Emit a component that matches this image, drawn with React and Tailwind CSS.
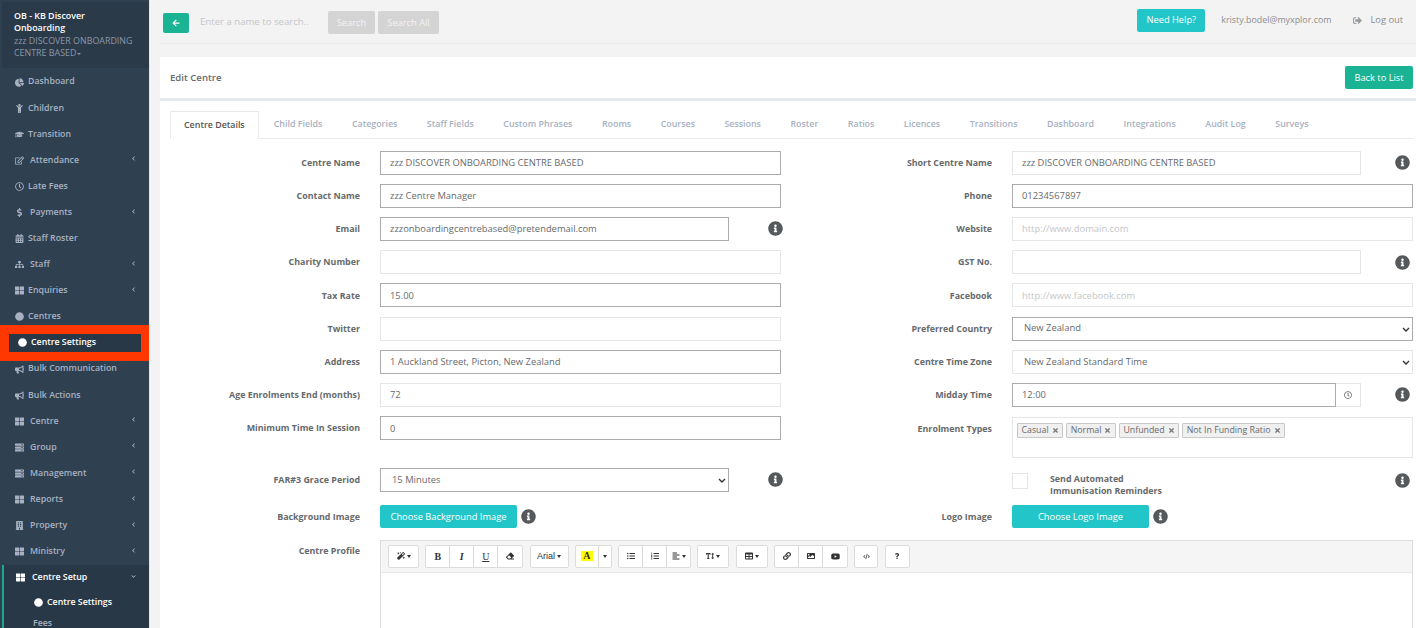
import {
  FaArrowLeft, FaBullhorn, FaBuilding, FaCalendarAlt, FaChartPie, FaChevronDown, FaChevronLeft, FaChild, FaCircle,
  FaCode, FaDollarSign, FaEraser, FaGraduationCap, FaImage, FaInfoCircle, FaLink, FaListOl, FaListUl, FaAlignLeft,
  FaMagic, FaQuestion, FaRegClock, FaRegEdit, FaServer, FaSignOutAlt, FaSitemap, FaTable, FaTextHeight, FaThLarge, FaTimes, FaYoutube,
} from 'react-icons/fa'

const NAV = [
  { label: 'Dashboard', icon: FaChartPie },
  { label: 'Children', icon: FaChild },
  { label: 'Transition', icon: FaGraduationCap },
  { label: 'Attendance', icon: FaRegEdit, sub: true, wide: true },
  { label: 'Late Fees', icon: FaRegClock },
  { label: 'Payments', icon: FaDollarSign, sub: true, wide: true },
  { label: 'Staff Roster', icon: FaCalendarAlt },
  { label: 'Staff', icon: FaSitemap, sub: true, wide: true },
  { label: 'Enquiries', icon: FaThLarge, sub: true },
  { label: 'Centres', icon: FaCircle },
  { label: 'Centre Settings', icon: FaCircle, marked: true },
  { label: 'Bulk Communication', icon: FaBullhorn },
  { label: 'Bulk Actions', icon: FaBullhorn },
  { label: 'Centre', icon: FaThLarge, sub: true, wide: true },
  { label: 'Group', icon: FaServer, sub: true, wide: true },
  { label: 'Management', icon: FaServer, sub: true, wide: true },
  { label: 'Reports', icon: FaThLarge, sub: true, wide: true },
  { label: 'Property', icon: FaBuilding, sub: true, wide: true },
  { label: 'Ministry', icon: FaThLarge, sub: true, wide: true },
]

const TABS = ['Centre Details', 'Child Fields', 'Categories', 'Staff Fields', 'Custom Phrases', 'Rooms', 'Courses', 'Sessions', 'Roster', 'Ratios', 'Licences', 'Transitions', 'Dashboard', 'Integrations', 'Audit Log', 'Surveys']

const inputCls = 'h-6 w-full border border-[#e5e6e7] bg-white px-[9px] text-[9.4px] text-[#676a6c] outline-none placeholder:text-[#c4c6c8]'
const strongCls = 'h-6 w-full border border-[#a9abad] bg-white px-[9px] text-[9.4px] text-[#676a6c] outline-none'

function Info({ className = '' }) {
  return <FaInfoCircle className={`text-[15px] text-[#55595c] shrink-0 ${className}`} />
}

function NavItem({ item }) {
  const Icon = item.icon
  return (
    <div className="relative flex h-[26.1px] shrink-0 items-center pl-[13px] pr-[13px] text-[8.8px] font-semibold text-[#a7b1c2]">
      <Icon className={`shrink-0 text-[9px] ${item.marked ? 'ml-[3px] text-white' : ''}`} />
      <span className={`${item.wide ? 'ml-[6px]' : 'ml-[4px]'} ${item.marked ? 'text-white' : ''}`}>{item.label}</span>
      {item.sub && <FaChevronLeft className="ml-auto mb-[3px] text-[5px]" />}
      {item.marked && (
        <div className="absolute left-[-2px] top-[-5px] flex h-[36px] w-[150px] border-[9px] border-[#ff3700] bg-transparent">
          <div className="-z-10 h-full w-full bg-[#293846]" />
        </div>
      )}
    </div>
  )
}

function Sidebar() {
  return (
    <aside className="flex h-full w-[150px] shrink-0 flex-col overflow-hidden border-r border-[#e7e7e7] bg-[#2f4050] pl-[2px]">
      <div className="mt-[2px] h-[66px] shrink-0 bg-[#2a3a49] pl-3 pr-2 pt-[8px] text-[8.9px] leading-[12.4px]">
        <div className="pr-8 font-semibold text-white">OB - KB Discover Onboarding</div>
        <div className="text-[#8a97a8]">
          zzz DISCOVER ONBOARDING CENTRE BASED
          <span className="ml-[1px] inline-block border-x-[2px] border-t-[2px] border-x-transparent border-t-[#8a97a8] align-middle" />
        </div>
      </div>
      <nav className="isolate mt-px flex flex-col">
        {NAV.map((item) => <NavItem key={item.label} item={item} />)}
        <div className="border-l-[2px] border-[#19aa8d] bg-[#293846]">
          <div className="flex h-[26px] items-center pl-[12px] pr-[13px] text-[8.8px] font-semibold text-white">
            <FaThLarge className="text-[9px]" />
            <span className="ml-[7px]">Centre Setup</span>
            <FaChevronDown className="ml-auto mb-[3px] text-[5px] text-[#a7b1c2]" />
          </div>
          <div className="flex h-[24px] items-center pl-[30px] text-[8.8px] font-semibold text-white">
            <FaCircle className="text-[9px]" />
            <span className="ml-[4px]">Centre Settings</span>
          </div>
          <div className="flex h-[18px] items-center pl-[29px] text-[8.8px] font-semibold text-[#a7b1c2]">Fees</div>
        </div>
      </nav>
    </aside>
  )
}

function TopBar() {
  return (
    <div className="mt-[2px] flex h-[42px] shrink-0 items-center border-b border-[#e7eaec] bg-[#f3f3f4] pl-[3px] pr-[13px]">
      <button className="flex h-[20px] w-[26px] items-center justify-center rounded-[2px] bg-[#1ab394] text-[8px] text-white"><FaArrowLeft /></button>
      <span className="ml-[11px] w-[128px] text-[9.6px] text-[#c4c6c8]">Enter a name to search..</span>
      <button className="h-[23px] w-[47px] rounded-[2px] bg-[#d4d4d4] text-[9.3px] text-[#f3f3f4]">Search</button>
      <button className="ml-[3px] h-[23px] w-[61px] rounded-[2px] bg-[#d4d4d4] text-[9.3px] text-[#f3f3f4]">Search All</button>
      <button className="mb-[5px] ml-auto h-[23px] w-[68px] rounded-[2px] bg-[#23c6c8] text-[9.3px] text-white">Need Help?</button>
      <span className="mb-[5px] ml-4 text-[8.9px] text-[#8b8d8f]">kristy.bodel@myxplor.com</span>
      <FaSignOutAlt className="mb-[5px] ml-[22px] text-[9px] text-[#999c9e]" />
      <span className="mb-[5px] ml-[8px] text-[9.3px] text-[#8b8d8f]">Log out</span>
    </div>
  )
}

function Tabs() {
  return (
    <div className="ml-[10px] mr-[3px] mt-[10px] flex h-[28px] shrink-0 items-stretch border-b border-[#e7eaec]">
      {TABS.map((tab, i) => (
        <div
          key={tab}
          className={`flex items-center pb-px text-[8.9px] font-semibold ${i === 0 ? '-mb-px mr-px border border-b-0 border-[#e7eaec] bg-white px-[13px] text-[#555]' : 'mr-[1.5px] px-[14px] text-[#a7b1c2]'}`}
        >
          {tab}
        </div>
      ))}
    </div>
  )
}

// one label + control pair; the label column is fixed so the controls line up
function Field({ label, children, className = 'h-[33.2px] items-center', right, labelClass = '' }) {
  return (
    <div className={`flex ${className} ${right ? 'pr-[3px]' : 'pr-[11px]'}`}>
      <label className={`w-[200px] shrink-0 text-right text-[8.9px] font-bold text-[#676a6c] ${labelClass}`}>{label}</label>
      <div className="ml-5 flex min-w-0 flex-1 items-center">{children}</div>
    </div>
  )
}

function Text({ value, strong, placeholder, short }) {
  return (
    <input
      readOnly
      value={value}
      placeholder={placeholder}
      className={`${strong ? strongCls : inputCls} ${short ? '!w-[349px] shrink-0' : ''}`}
    />
  )
}

function Picker({ value, strong = true, short }) {
  return (
    <div className={`relative ${short ? 'w-[349px] shrink-0' : 'w-full'}`}>
      <select value={value} onChange={() => {}} className={`${strong ? strongCls : inputCls} block appearance-none !px-[11px]`}>
        <option>{value}</option>
      </select>
      <svg viewBox="0 0 8 5" className="pointer-events-none absolute right-[3px] top-[10px] h-[5px] w-[8px]" fill="none" stroke="#333" strokeWidth="1.4">
        <path d="M1 1l3 3 3-3" />
      </svg>
    </div>
  )
}

function Tag({ label }) {
  return (
    <span className="flex h-[15px] items-center gap-[3px] rounded-[1px] border border-[#c8c8c8] bg-[#f0f0f0] px-[3.5px] text-[8.8px] text-[#676a6c]">
      {label}
      <FaTimes className="text-[7px] text-[#777]" />
    </span>
  )
}

function Btn({ children, className = 'w-[24px]' }) {
  return <div className={`flex h-[21px] items-center justify-center gap-[2px] border-r border-[#d9d9d9] text-[9px] text-[#333] last:border-r-0 ${className}`}>{children}</div>
}

function Group({ children }) {
  return <div className="flex overflow-hidden rounded-[2px] border border-[#dcdcdc] bg-white">{children}</div>
}

function Caret() {
  return <span className="inline-block border-x-[2.5px] border-t-[3px] border-x-transparent border-t-[#333]" />
}

function Toolbar() {
  return (
    <div className="flex h-[32px] items-center gap-[6.3px] border-b border-[#e7e7e7] bg-[#f5f5f5] pl-[7px]">
      <Group><Btn className="w-[29px]"><FaMagic className="text-[8px]" /><Caret /></Btn></Group>
      <Group>
        <Btn><span className="font-['Liberation_Serif'] text-[10px] font-bold">B</span></Btn>
        <Btn><span className="font-['Liberation_Serif'] text-[10px] italic font-bold">I</span></Btn>
        <Btn><span className="font-['Liberation_Serif'] text-[10px] underline">U</span></Btn>
        <Btn><FaEraser className="text-[8px]" /></Btn>
      </Group>
      <Group><Btn className="w-[37px]"><span className="font-['Liberation_Sans'] text-[9px]">Arial</span><Caret /></Btn></Group>
      <Group>
        <Btn className="w-[23px]"><span className="bg-[#ffff00] px-[2px] font-['Liberation_Serif'] text-[10px] leading-[10px] font-bold">A</span></Btn>
        <Btn className="w-[12px]"><Caret /></Btn>
      </Group>
      <Group>
        <Btn><FaListUl className="text-[8px]" /></Btn>
        <Btn><FaListOl className="text-[8px]" /></Btn>
        <Btn className="w-[23px]"><FaAlignLeft className="text-[8px]" /><Caret /></Btn>
      </Group>
      <Group><Btn className="w-[30px]"><FaTextHeight className="text-[8px]" /><Caret /></Btn></Group>
      <Group><Btn className="w-[30px]"><FaTable className="text-[8px]" /><Caret /></Btn></Group>
      <Group>
        <Btn><FaLink className="text-[8px]" /></Btn>
        <Btn><FaImage className="text-[8px]" /></Btn>
        <Btn><FaYoutube className="text-[9px]" /></Btn>
      </Group>
      <Group><Btn className="w-[22px]"><FaCode className="text-[7px] text-[#666]" /></Btn></Group>
      <Group><Btn className="w-[23px]"><FaQuestion className="text-[6px]" /></Btn></Group>
    </div>
  )
}

function Form() {
  return (
    <div className="mt-[-4px] grid grid-cols-[632px_1fr] pt-[11px]">
      <div className="col-start-1">
        <Field label="Centre Name"><Text strong value="zzz DISCOVER ONBOARDING CENTRE BASED" /></Field>
        <Field label="Contact Name"><Text strong value="zzz Centre Manager" /></Field>
        <Field label="Email">
          <Text strong short value="zzzonboardingcentrebased@pretendemail.com" />
          <Info className="ml-[39px]" />
        </Field>
        <Field label="Charity Number"><Text value="" /></Field>
        <Field label="Tax Rate"><Text strong value="15.00" /></Field>
        <Field label="Twitter"><Text value="" /></Field>
        <Field label="Address"><Text strong value="1 Auckland Street, Picton, New Zealand" /></Field>
        <Field label="Age Enrolments End (months)"><Text value="72" /></Field>
        <Field label="Minimum Time In Session"><Text strong value="0" /></Field>
      </div>
      <div className="col-start-2">
        <Field right label="Short Centre Name">
          <Text short value="zzz DISCOVER ONBOARDING CENTRE BASED" />
          <Info className="ml-auto mr-[3px]" />
        </Field>
        <Field right label="Phone"><Text strong value="01234567897" /></Field>
        <Field right label="Website"><Text value="" placeholder="http://www.domain.com" /></Field>
        <Field right label="GST No.">
          <Text short value="" />
          <Info className="ml-auto mr-[3px]" />
        </Field>
        <Field right label="Facebook"><Text value="" placeholder="http://www.facebook.com" /></Field>
        <Field right label="Preferred Country"><Picker value="New Zealand" /></Field>
        <Field right label="Centre Time Zone"><Picker strong={false} value="New Zealand Standard Time" /></Field>
        <Field right label="Midday Time">
          <input readOnly value="12:00" className={`${strongCls} !w-[324px] shrink-0`} />
          <span className="flex h-6 w-[25px] shrink-0 items-center justify-center border border-l-0 border-[#e5e6e7] text-[8px] text-[#676a6c]"><FaRegClock /></span>
          <Info className="ml-auto mr-[3px]" />
        </Field>
        <Field right label="Enrolment Types" className="mt-[5.4px] h-[41px] items-start" labelClass="pt-[5px]">
          <div className="flex h-[41px] w-full items-start gap-[3px] border border-[#e5e6e7] px-[4px] pt-[5px]">
            <Tag label="Casual" /><Tag label="Normal" /><Tag label="Unfunded" /><Tag label="Not In Funding Ratio" />
          </div>
        </Field>
      </div>

      <div className="col-start-1 mt-[3.5px]">
        <Field label="FAR#3 Grace Period" className="h-[37px] items-center">
          <Picker short value="15 Minutes" />
          <Info className="ml-[39px]" />
        </Field>
        <Field label="Background Image" className="h-[37px] items-center">
          <button className="h-[23px] w-[137px] rounded-[2px] bg-[#23c6c8] text-[9.3px] text-white">Choose Background Image</button>
          <Info className="ml-1" />
        </Field>
      </div>
      <div className="col-start-2 mt-[15px]">
        <Field right label="" className="h-[25.5px] items-start">
          <span className="h-4 w-4 shrink-0 self-start border border-[#e5e6e7]" />
          <span className="ml-[22px] self-start text-[8.85px] leading-[12.4px] font-bold text-[#676a6c]">Send Automated<br />Immunisation Reminders</span>
          <Info className="ml-auto mr-[3px] self-start" />
        </Field>
        <Field right label="Logo Image" className="h-[37px] items-center">
          <button className="h-[23px] w-[137px] rounded-[2px] bg-[#23c6c8] text-[9.3px] text-white">Choose Logo Image</button>
          <Info className="ml-1" />
        </Field>
      </div>

      <div className="col-span-2 mt-[4.5px] flex pr-[3px]">
        <label className="w-[200px] shrink-0 pt-[4px] text-right text-[8.9px] font-bold text-[#676a6c]">Centre Profile</label>
        <div className="ml-5 h-[120px] flex-1 border border-[#dcdcdc]"><Toolbar /></div>
      </div>
    </div>
  )
}

export default function App() {
  return (
    <div className="flex h-[628px] w-[1416px] overflow-hidden bg-white font-['Open_Sans',sans-serif]">
      <Sidebar />
      <main className="flex min-w-0 flex-1 flex-col bg-[#f3f3f4] pl-[10px]">
        <TopBar />
        <div className="mt-[13px] flex h-[44px] shrink-0 items-center justify-between border-b-[3px] border-[#e7eaec] bg-white pl-[10px] pr-[3px]">
          <h2 className="mt-[2px] text-[9.6px] font-semibold text-[#676a6c]">Edit Centre</h2>
          <button className="h-[23px] w-[68px] rounded-[2px] bg-[#1ab394] text-[9.3px] text-white">Back to List</button>
        </div>
        <div className="flex flex-1 flex-col bg-white">
          <Tabs />
          <Form />
        </div>
      </main>
    </div>
  )
}
